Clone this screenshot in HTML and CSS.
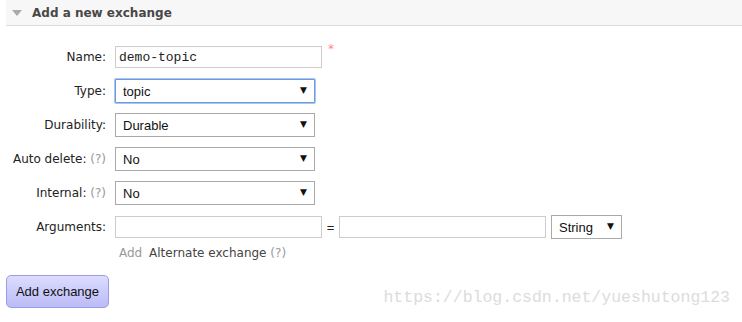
FILE: index.html
```html
<!doctype html>
<html>

<head>
	<meta charset='utf-8'>
	<title>Add a new exchange</title>

	<link rel="stylesheet" href="styles.css">
</head>

<body>
	<div class="section">
		<h2 class="head"><span class="tri"></span>Add a new exchange</h2>

		<table class="form">
			<tr>
				<th>Name:</th>
				<td><input type="text" class="name" value="demo-topic"><span class="req">*</span></td>
			</tr>
			<tr>
				<th>Type:</th>
				<td><span class="sel focus"><select>
							<option>topic</option>
						</select></span></td>
			</tr>
			<tr>
				<th>Durability:</th>
				<td><span class="sel"><select>
							<option>Durable</option>
						</select></span></td>
			</tr>
			<tr>
				<th>Auto delete: <span class="help">(?)</span></th>
				<td><span class="sel"><select>
							<option>No</option>
						</select></span></td>
			</tr>
			<tr>
				<th>Internal: <span class="help">(?)</span></th>
				<td><span class="sel"><select>
							<option>No</option>
						</select></span></td>
			</tr>
			<tr>
				<th>Arguments:</th>
				<td>
					<div class="args">
						<input type="text" class="arg">
						<span class="eq">=</span>
						<input type="text" class="arg">
						<span class="sel small"><select>
								<option>String</option>
							</select></span>
					</div>
				</td>
			</tr>
			<tr class="links">
				<th></th>
				<td><span class="add">Add</span> <span class="alt">Alternate exchange <span class="help">(?)</span></span></td>
			</tr>
		</table>

		<button class="submit">Add exchange</button>
	</div>

	<div class="mark">https://blog.csdn.net/yueshutong123</div>
</body>

</html>
```

FILE: styles.css
```css
* {
	box-sizing: border-box;
}

body {
	margin: 0;
	font-family: "DejaVu Sans", Verdana, sans-serif;
	font-size: 12px;
	color: #222;
	background: #fff;
}

.section {
	padding-left: 6px;
}

.head {
	margin: 0;
	height: 26px;
	display: flex;
	align-items: center;
	background: #f7f7f7;
	border-bottom: 1px solid #ddd;
	font-size: 12px;
	font-weight: bold;
	color: #484848;
	padding-left: 6px;
}

.tri {
	width: 0;
	height: 0;
	border-left: 5px solid transparent;
	border-right: 5px solid transparent;
	border-top: 6px solid #aaa;
	margin-right: 10px;
	margin-top: 1px;
}

.form {
	border-collapse: collapse;
	margin-top: 14px;
}

.form th {
	font-weight: normal;
	text-align: right;
	white-space: nowrap;
	width: 109px;
	height: 34px;
	padding: 0 9px 0 0;
	vertical-align: middle;
	color: #222;
}

.form td {
	padding: 0;
	vertical-align: middle;
}

.help {
	color: #999;
}

input[type="text"] {
	border: 1px solid #ccc;
	height: 22px;
	font-family: "Liberation Mono", monospace;
	font-size: 13px;
	padding: 0 3px;
	color: #222;
	outline: none;
}

.name {
	width: 207px;
	vertical-align: middle;
}

.req {
	color: #f88;
	font-size: 12px;
	margin-left: 6px;
	vertical-align: top;
	position: relative;
	top: -4px;
}

.sel {
	position: relative;
	display: inline-block;
	vertical-align: middle;
}

.sel select {
	appearance: none;
	-webkit-appearance: none;
	width: 200px;
	height: 24px;
	border: 1px solid #aaa;
	border-radius: 0;
	background: #fff;
	font-family: "Liberation Sans", Arial, sans-serif;
	font-size: 13px;
	color: #111;
	padding: 0 0 0 7px;
	outline: none;
	display: block;
}

.sel::after {
	content: "\25BC";
	position: absolute;
	right: 8px;
	top: 6px;
	font-size: 9px;
	color: #111;
	pointer-events: none;
}

.sel.focus select {
	border: 1px solid #6d9ae0;
	box-shadow: 0 0 0 1px #a9c6f2;
	border-radius: 1px;
}

.sel.small select {
	width: 71px;
}

.args {
	display: flex;
	align-items: center;
}

.arg {
	width: 207px;
	flex-shrink: 0;
}

.eq {
	width: 17px;
	flex-shrink: 0;
	text-align: center;
	font-family: "Liberation Sans", Arial, sans-serif;
	font-size: 13px;
}

.args .sel {
	margin-left: 5px;
	flex-shrink: 0;
}

.links th,
.links td {
	height: 16px;
	padding-top: 1px;
}

.links td {
	padding-left: 4px;
}

.add {
	color: #999;
	margin-right: 3px;
}

.alt {
	color: #444;
}

.submit {
	margin-top: 15px;
	width: 103px;
	height: 33px;
	border: 1px solid #9b9be6;
	border-radius: 5px;
	background: linear-gradient(#dcdcff, #bbbbf7);
	font-family: "Liberation Sans", Arial, sans-serif;
	font-size: 13px;
	color: #111;
	padding: 0;
}

.mark {
	position: absolute;
	right: 12px;
	top: 288px;
	font-family: "Liberation Mono", "DejaVu Sans Mono", monospace;
	font-size: 16.5px;
	color: #dcdcdc;
}
```
